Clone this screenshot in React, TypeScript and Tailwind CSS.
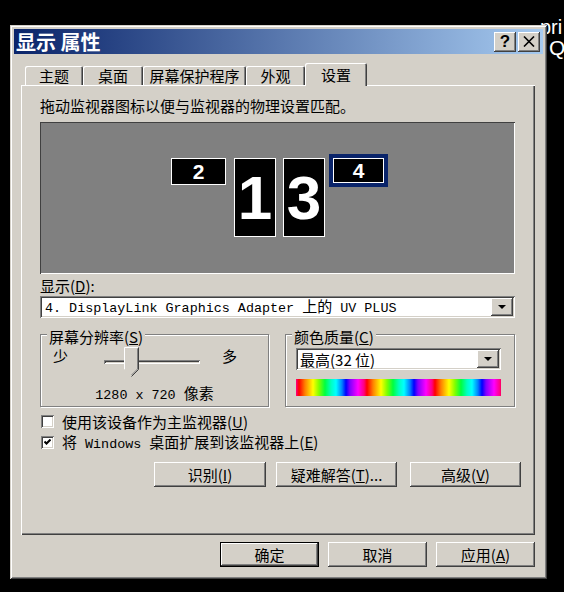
import React from 'react'

// win2000 style bevels
const frame = 'shadow-[inset_1px_1px_#d4d0c8,inset_-1px_-1px_#404040,inset_2px_2px_#ffffff,inset_-2px_-2px_#808080]'
const raised = 'shadow-[inset_-1px_-1px_#404040,inset_1px_1px_#ffffff,inset_-2px_-2px_#808080,inset_2px_2px_#d4d0c8]'
const sunken = 'shadow-[inset_1px_1px_#808080,inset_-1px_-1px_#ffffff,inset_2px_2px_#404040,inset_-2px_-2px_#d4d0c8]'
const mono = "font-['Liberation_Mono','Noto_Sans_CJK_SC',monospace] text-[13.4px]"

function Arrow() {
  return (
    <div className={`flex h-[18px] w-[22px] items-center justify-center bg-[#d4d0c8] ${raised}`}>
      <svg width="8" height="4" viewBox="0 0 8 4">
        <path d="M0 0h8L4 4z" fill="#000" />
      </svg>
    </div>
  )
}

function Tab({ label, w, active }: { label: string; w: string; active?: boolean }) {
  if (active) {
    return (
      <div
        className={`relative z-10 -mb-px flex h-[23px] ${w} items-start justify-center rounded-tl-[2px] rounded-tr-[2px] bg-[#d4d0c8] pt-[3px] shadow-[inset_1px_1px_#ffffff,inset_-1px_0_#404040,inset_-2px_0_#808080]`}
      >
        {label}
      </div>
    )
  }
  return (
    <div
      className={`flex h-[19px] ${w} items-start justify-center rounded-tl-[2px] rounded-tr-[2px] pt-[1px] shadow-[inset_1px_1px_#ffffff,inset_-1px_0_#404040,inset_-2px_0_#808080]`}
    >
      {label}
    </div>
  )
}

function Button({ children, w, def }: { children: React.ReactNode; w: string; def?: boolean }) {
  return (
    <div className={`${w} h-[25px] ${def ? 'border border-black' : ''}`}>
      <div className={`flex h-full w-full items-center justify-center bg-[#d4d0c8] ${raised}`}>{children}</div>
    </div>
  )
}

function Check({ checked }: { checked?: boolean }) {
  return (
    <div className={`flex h-[13px] w-[13px] items-center justify-center bg-white ${sunken}`}>
      {checked && (
        <svg width="7" height="7" viewBox="0 0 7 7">
          <path d="M0.5 2.5 L2.5 4.5 L6.5 0.5" stroke="#000" strokeWidth="2" fill="none" />
        </svg>
      )}
    </div>
  )
}

export default function App() {
  return (
    <div className="relative h-[592px] w-[564px] overflow-hidden bg-black font-['Noto_Sans_CJK_SC',sans-serif] text-[15px] leading-[17px] text-black">
      {/* desktop text behind the dialog */}
      <div className="absolute left-[540px] top-[17px] font-['Liberation_Sans',sans-serif] text-[20px] leading-[20px] text-white">pri</div>
      <div className="absolute left-[549px] top-[38px] font-['Liberation_Sans',sans-serif] text-[21px] leading-[20px] text-white">Q</div>

      <div className={`relative z-10 ml-[10px] mt-[25px] flex h-[554px] w-[537px] flex-col bg-[#d4d0c8] p-[4px] ${frame}`}>
        {/* title bar */}
        <div className="flex h-[25px] items-center bg-[linear-gradient(90deg,#0a246a,#a6caf0)] pl-[2px] pr-[3px]">
          <span className="flex-1 text-[20px] font-bold leading-[22px] text-white">显示 属性</span>
          <div className={`mr-[2px] flex h-[20px] w-[22px] items-center justify-center bg-[#d4d0c8] font-['Liberation_Sans',sans-serif] text-[17px] font-bold leading-none ${raised}`}>
            ?
          </div>
          <div className={`flex h-[20px] w-[22px] items-center justify-center bg-[#d4d0c8] ${raised}`}>
            <svg width="12" height="11" viewBox="0 0 12 11">
              <path d="M1 0.5 L11 10.5 M11 0.5 L1 10.5" stroke="#000" strokeWidth="1.6" />
            </svg>
          </div>
        </div>

        {/* tabs */}
        <div className="ml-[11px] mt-[9px] flex h-[22px] items-end">
          <Tab label="主题" w="w-[58px]" />
          <Tab label="桌面" w="w-[60px]" />
          <Tab label="屏幕保护程序" w="w-[103px]" />
          <Tab label="外观" w="w-[59px]" />
          <Tab label="设置" w="w-[62px]" active />
        </div>

        {/* panel */}
        <div className="ml-[7px] flex h-[450px] w-[514px] flex-col pl-[19px] pt-[12px] shadow-[inset_1px_1px_#ffffff,inset_-1px_-1px_#404040,inset_-2px_-2px_#808080]">
          <div>拖动监视器图标以便与监视器的物理设置匹配。</div>

          {/* monitor arrangement */}
          <div className="relative mt-[8px] h-[152px] w-[475px] bg-[#808080] shadow-[inset_1px_1px_#404040,inset_-1px_-1px_#ffffff]">
            <div className="absolute left-[131px] top-[36px] flex h-[27px] w-[55px] items-center justify-center border border-white bg-black font-['Liberation_Sans',sans-serif] text-[21px] font-bold text-white">
              2
            </div>
            <div className="absolute left-[194px] top-[36px] flex h-[79px] w-[42px] items-center justify-center border border-white bg-black font-['Liberation_Sans',sans-serif] text-[62px] font-bold leading-none text-white">
              1
            </div>
            <div className="absolute left-[243px] top-[36px] flex h-[79px] w-[42px] items-center justify-center border border-white bg-black font-['Liberation_Sans',sans-serif] text-[62px] font-bold leading-none text-white">
              3
            </div>
            <div className="absolute left-[289px] top-[32px] h-[33px] w-[59px] bg-[#0a246a] p-[4px]">
              <div className="flex h-full w-full items-center justify-center border border-white bg-black font-['Liberation_Sans',sans-serif] text-[21px] font-bold text-white">
                4
              </div>
            </div>
          </div>

          <div className="mt-[3px]">
            显示(<u>D</u>):
          </div>
          <div className={`mt-[2px] flex h-[22px] w-[475px] items-center bg-white pl-[5px] pr-[2px] ${sunken}`}>
            <span className={`flex-1 ${mono}`}>
              4. DisplayLink Graphics Adapter <span className="font-['Noto_Sans_CJK_SC'] text-[15px]">上的</span> UV PLUS
            </span>
            <Arrow />
          </div>

          {/* group boxes */}
          <div className="mt-[16px] flex gap-[16px]">
            <div className="relative h-[73px] w-[229px] border border-[#808080] shadow-[inset_1px_1px_#ffffff,1px_1px_#ffffff]">
              <div className="absolute left-[6px] top-[-5px] bg-[#d4d0c8] px-[2px] leading-[14px]">
                屏幕分辨率(<u>S</u>)
              </div>
              <div className="flex pl-[12px] pt-[12px]">
                <span className="w-[15px]">少</span>
                <div className="relative ml-[36px] h-[31px] w-[96px]">
                  <div className={`absolute left-0 top-[13px] h-[4px] w-[96px] ${sunken}`} />
                  <svg className="absolute left-[20px] top-0" width="15" height="31" viewBox="0 0 15 31">
                    <path d="M0.5 22.5 V0.5 H14.5 V22.5 L7.5 29.5 Z" fill="#d4d0c8" />
                    <path d="M0.5 22.5 V0.5 H14" stroke="#ffffff" fill="none" />
                    <path d="M14.5 0.5 V22.5 L7.5 29.5" stroke="#404040" fill="none" />
                    <path d="M13.5 1.5 V22 L7.5 28" stroke="#808080" fill="none" />
                    <path d="M0.5 22.5 L7 29" stroke="#d4d0c8" fill="none" />
                  </svg>
                </div>
                <span className="ml-[22px]">多</span>
              </div>
              <div className={`mt-[6px] text-center ${mono}`}>
                1280 x 720 <span className="font-['Noto_Sans_CJK_SC'] text-[15px]">像素</span>
              </div>
            </div>

            <div className="relative h-[73px] w-[230px] border border-[#808080] shadow-[inset_1px_1px_#ffffff,1px_1px_#ffffff]">
              <div className="absolute left-[6px] top-[-5px] bg-[#d4d0c8] px-[2px] leading-[14px]">
                颜色质量(<u>C</u>)
              </div>
              <div className="pl-[10px] pt-[13px]">
                <div className={`flex h-[22px] w-[205px] items-center bg-white pl-[4px] pr-[2px] ${sunken}`}>
                  <span className="flex-1">最高(32 位)</span>
                  <Arrow />
                </div>
                <div className="mt-[9px] h-[17px] w-[205px] bg-[repeating-linear-gradient(90deg,#ff0080_0px,#ff0000_3px,#ff8000_9px,#ffff00_17px,#80ff00_23px,#00ff40_29px,#00ffc0_35px,#00ffff_40px,#0080ff_46px,#0000ff_50px,#8000ff_54px,#ff00ff_62px,#ff0080_68px)]" />
              </div>
            </div>
          </div>

          {/* checkboxes */}
          <div className="ml-[1px] mt-[6px] flex h-[17px] items-center gap-[8px]">
            <Check />
            <span>
              使用该设备作为主监视器(<u>U</u>)
            </span>
          </div>
          <div className="ml-[1px] mt-[4px] flex h-[17px] items-center gap-[8px]">
            <Check checked />
            <span>
              将<span className={mono}> Windows </span>桌面扩展到该监视器上(<u>E</u>)
            </span>
          </div>

          <div className="ml-[114px] mt-[11px] flex">
            <Button w="w-[112px]">
              识别(<u>I</u>)
            </Button>
            <div className="ml-[10px]">
              <Button w="w-[121px]">
                疑难解答(<u>T</u>)...
              </Button>
            </div>
            <div className="ml-[13px]">
              <Button w="w-[111px]">
                高级(<u>V</u>)
              </Button>
            </div>
          </div>
        </div>

        {/* dialog buttons */}
        <div className="mr-[8px] mt-[7px] flex justify-end gap-[9px]">
          <Button w="w-[99px]" def>
            确定
          </Button>
          <Button w="w-[99px]">取消</Button>
          <Button w="w-[99px]">
            应用(<u>A</u>)
          </Button>
        </div>
      </div>
    </div>
  )
}
